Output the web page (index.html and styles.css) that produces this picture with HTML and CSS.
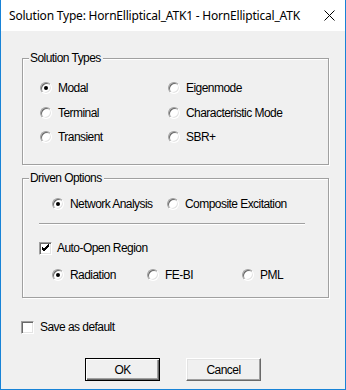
FILE: index.html
```html
<!DOCTYPE html>
<html>
<head>
<meta charset="utf-8">
<link rel="stylesheet" href="styles.css">
</head>
<body>
<div class="window">
  <div class="titlebar">
    <span class="title">Solution Type: HornElliptical_ATK1 - HornElliptical_ATK</span>
    <svg class="close" width="11" height="11" viewBox="0 0 11 11"><path d="M0.5 0.5 L10.5 10.5 M10.5 0.5 L0.5 10.5" stroke="#000" stroke-width="1" fill="none"/></svg>
  </div>
  <div class="content">
    <div class="group g1">
      <span class="legend">Solution Types</span>
      <div class="types">
        <div class="opt"><span class="rb on"></span>Modal</div>
        <div class="opt"><span class="rb"></span>Eigenmode</div>
        <div class="opt"><span class="rb"></span>Terminal</div>
        <div class="opt"><span class="rb"></span>Characteristic Mode</div>
        <div class="opt"><span class="rb"></span>Transient</div>
        <div class="opt"><span class="rb"></span>SBR+</div>
      </div>
    </div>
    <div class="group g2">
      <span class="legend">Driven Options</span>
      <div class="row driven">
        <div class="opt w115"><span class="rb on"></span>Network Analysis</div>
        <div class="opt"><span class="rb"></span>Composite Excitation</div>
      </div>
      <div class="sep"></div>
      <div class="opt chkrow"><span class="cb"><svg width="9" height="9" viewBox="0 0 9 9"><path d="M1 3 L3 5 L8 0 M1 4 L3 6 L8 1 M1 5 L3 7 L8 2" stroke="#000" stroke-width="1" fill="none"/></svg></span>Auto-Open Region</div>
      <div class="row region">
        <div class="opt w95"><span class="rb on"></span>Radiation</div>
        <div class="opt w95"><span class="rb"></span>FE-BI</div>
        <div class="opt"><span class="rb"></span>PML</div>
      </div>
    </div>
    <div class="opt saverow"><span class="cb"></span>Save as default</div>
    <div class="buttons">
      <div class="btn default"><span>OK</span></div>
      <div class="btn"><span>Cancel</span></div>
    </div>
  </div>
</div>
</body>
</html>
```

FILE: styles.css
```css
html, body {
  margin: 0;
  padding: 0;
  background: #f0f0f0;
}
.window {
  width: 346px;
  height: 390px;
  box-sizing: border-box;
  border: 1px solid #1883d7;
  border-top: none;
  background: #f0f0f0;
  font-family: "Liberation Sans", Arial, sans-serif;
  font-size: 12px;
  letter-spacing: -0.55px;
  color: #000;
  display: flex;
  flex-direction: column;
}
.titlebar {
  height: 31px;
  background: #fff;
  display: flex;
  align-items: center;
  padding-left: 8px;
  padding-right: 10px;
  flex: none;
}
.title {
  font-family: "Noto Sans", "Open Sans", sans-serif;
  font-size: 12px;
  letter-spacing: -0.2px;
  color: #000;
  flex: 1;
  white-space: nowrap;
}
.close {
  display: block;
}
.content {
  display: flex;
  flex-direction: column;
  align-items: flex-start;
  padding-left: 21px;
}
.group {
  position: relative;
  box-sizing: border-box;
  width: 307px;
  border: 1px solid #a0a0a0;
  box-shadow: inset 1px 1px 0 #fff, 1px 1px 0 #fff;
}
.legend {
  position: absolute;
  left: 6px;
  top: -8px;
  line-height: 14px;
  padding: 0 2px 0 1px;
  background: #f0f0f0;
  white-space: nowrap;
}
.g1 {
  margin-top: 27px;
  height: 107px;
  padding: 17px 0 0 17px;
}
.types {
  display: grid;
  grid-template-columns: 128px auto;
  grid-auto-rows: 24.5px;
}
.opt {
  display: flex;
  align-items: center;
  gap: 6px;
  white-space: nowrap;
}
.rb {
  width: 12px;
  height: 12px;
  box-sizing: border-box;
  border-radius: 50%;
  border: 1px solid;
  border-color: #a0a0a0 #fff #fff #a0a0a0;
  box-shadow: inset 1px 1px 0 #696969, inset -1px -1px 0 #e3e3e3;
  background: #fff;
  position: relative;
  flex: none;
}
.rb.on::after {
  content: "";
  position: absolute;
  left: 3px;
  top: 3px;
  width: 4px;
  height: 4px;
  border-radius: 50%;
  background: #000;
}
.cb {
  width: 13px;
  height: 13px;
  box-sizing: border-box;
  border: 1px solid;
  border-color: #a0a0a0 #fff #fff #a0a0a0;
  box-shadow: inset 1px 1px 0 #696969, inset -1px -1px 0 #e3e3e3;
  background: #fff;
  display: flex;
  align-items: center;
  justify-content: center;
  flex: none;
}
.cb svg {
  display: block;
}
.g2 {
  margin-top: 13px;
  height: 120px;
  padding: 15px 0 0 0;
}
.row {
  display: flex;
  height: 20px;
  padding-left: 29px;
}
.w115 { width: 115px; }
.w95 { width: 95px; }
.sep {
  margin: 9px 0 0 16px;
  width: 266px;
  height: 1px;
  background: #a0a0a0;
  box-shadow: 0 1px 0 #fff;
}
.chkrow {
  margin: 16px 0 0 16px;
  height: 16px;
  gap: 5px;
}
.region {
  margin-top: 9px;
}
.saverow {
  margin: 21px 0 0 -1px;
  height: 16px;
}
.buttons {
  display: flex;
  gap: 26px;
  margin: 23px 0 0 63px;
}
.btn {
  width: 75px;
  height: 23px;
  box-sizing: border-box;
  background: #f0f0f0;
  border: 1px solid;
  border-color: #fff #696969 #696969 #fff;
  box-shadow: inset -1px -1px 0 #a0a0a0, inset 1px 1px 0 #e3e3e3;
  display: flex;
  align-items: center;
  justify-content: center;
}
.btn.default {
  border: 1px solid #000;
  box-shadow: inset 1px 1px 0 #fff, inset -1px -1px 0 #696969, inset -2px -2px 0 #a0a0a0;
}
```
